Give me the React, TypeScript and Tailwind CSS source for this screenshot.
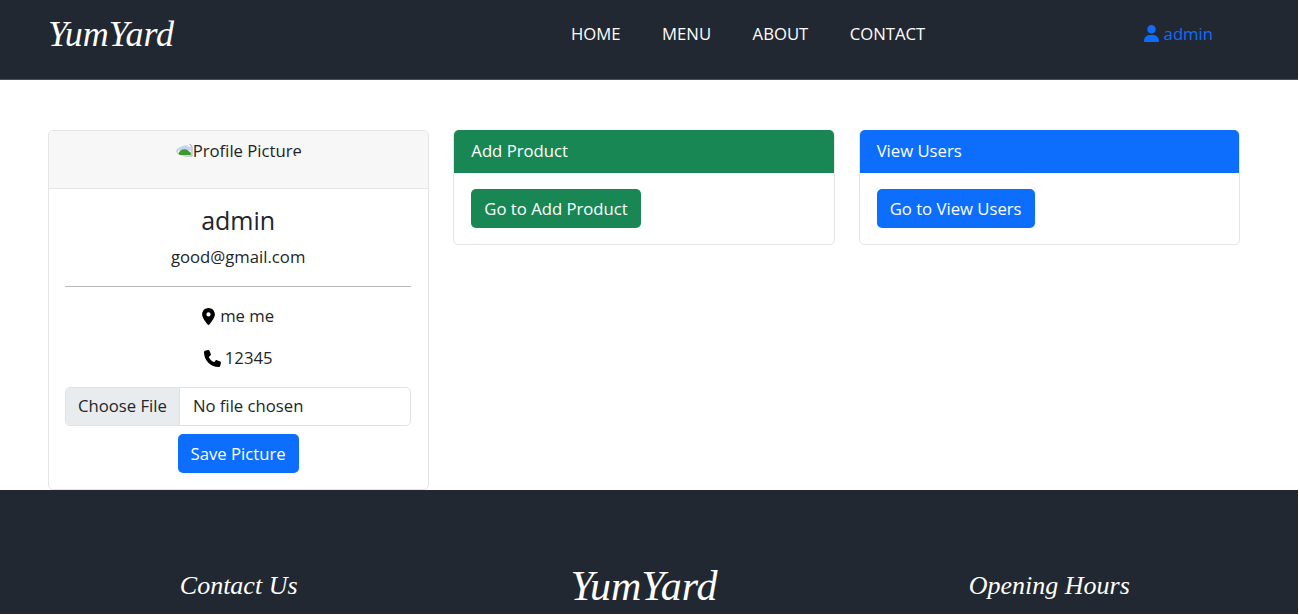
import { FaLocationDot, FaPhone, FaUser } from 'react-icons/fa6';

const navLinks = ['HOME', 'MENU', 'ABOUT', 'CONTACT'];

const BrokenImage = () => (
  <svg width="17" height="17" viewBox="0 0 16 16" className="shrink-0">
    <path d="M1 2h10l4 4v9H1z" fill="#fff" stroke="#a9a9a9" />
    <path d="M2 3h9v3h3v4H2z" fill="#c3d4f2" />
    <path d="M2 13c2-4 5-5 8-4l4 3v2H2z" fill="#3f9a2e" />
  </svg>
);

const App = () => {
  return (
    <div className="min-h-screen flex flex-col bg-white pr-px pb-px font-['Open_Sans',sans-serif] text-[16.7px] text-[#212529]">
      {/* Navbar */}
      <header className="h-20 flex items-center bg-[#222831] pl-12 pr-12 pb-3 border-b border-[#4b5058]">
        <a className="w-[128px] font-['Liberation_Serif',serif] italic text-[36px] leading-none text-white whitespace-nowrap">YumYard</a>
        <nav className="flex gap-[41.5px] ml-[395px] text-white">
          {navLinks.map((link) => (
            <a key={link}>{link}</a>
          ))}
        </nav>
        <a className="ml-auto mr-[37px] flex items-center gap-[5px] text-[#0d6efd]">
          <FaUser className="w-[15px] h-[17px]" />
          admin
        </a>
      </header>

      {/* Cards */}
      <main className="grid grid-cols-3 gap-x-6 items-start pt-[50px] pl-12 pr-[58px] flex-1">
        <section className="h-[360px] border border-[#e4e5e6] rounded-[5px] overflow-hidden">
          <div className="h-[58px] flex justify-center items-start pt-[9px] bg-[#f7f7f7] border-b border-[#e4e5e6]">
            <div className="flex w-[126px] h-[22px] rounded-[50%] overflow-hidden">
              <BrokenImage />
              <span className="leading-[21px] whitespace-nowrap">Profile Picture</span>
            </div>
          </div>
          <div className="flex flex-col items-center pl-4 pr-[17px] pt-[13px]">
            <h2 className="text-[25px] leading-[36px]">admin</h2>
            <p className="mt-[7px] leading-6">good@gmail.com</p>
            <hr className="w-full mt-[17px] border-t border-[#b9babb]" />
            <p className="mt-[17px] h-6 flex items-center gap-[5px]">
              <FaLocationDot className="w-[13px] h-[17px] text-black" />
              me me
            </p>
            <p className="mt-[18px] h-6 flex items-center gap-[4px]">
              <FaPhone className="w-[17px] h-[17px] text-black" />
              12345
            </p>
            <div className="w-full mt-[17px] h-[39px] flex items-center border border-[#dee2e6] rounded-[5px] overflow-hidden">
              <span className="h-full flex items-center px-3 pb-px bg-[#e9ecef] border-r border-[#dee2e6]">Choose File</span>
              <span className="pl-[13px] pb-px">No file chosen</span>
            </div>
            <button className="mt-2 h-[39px] px-[13px] rounded-[5px] bg-[#0d6efd] text-white">Save Picture</button>
          </div>
        </section>

        <section className="border border-[#e4e5e6] rounded-[5px]">
          <div className="h-[43px] -mt-px flex items-center px-[17px] pb-px rounded-t-[5px] bg-[#198754] text-white">Add Product</div>
          <div className="py-4 pl-[17px] pr-4">
            <button className="h-[39px] px-[13px] rounded-[5px] bg-[#198754] text-white">Go to Add Product</button>
          </div>
        </section>

        <section className="border border-[#e4e5e6] rounded-[5px]">
          <div className="h-[43px] -mt-px flex items-center px-[17px] pb-px rounded-t-[5px] bg-[#0d6efd] text-white">View Users</div>
          <div className="py-4 pl-[17px] pr-4">
            <button className="h-[39px] px-[13px] rounded-[5px] bg-[#0d6efd] text-white">Go to View Users</button>
          </div>
        </section>
      </main>

      {/* Footer */}
      <footer className="h-[124px] bg-[#222831] pl-12 pr-[58px] pt-[76px] overflow-hidden">
        <div className="grid grid-cols-3 gap-x-6 text-center text-white font-['Liberation_Serif',serif] italic leading-[40px]">
          <h4 className="text-[26px]">Contact Us</h4>
          <h4 className="text-[42px]">YumYard</h4>
          <h4 className="text-[26px]">Opening Hours</h4>
        </div>
      </footer>
    </div>
  );
};

export default App;
